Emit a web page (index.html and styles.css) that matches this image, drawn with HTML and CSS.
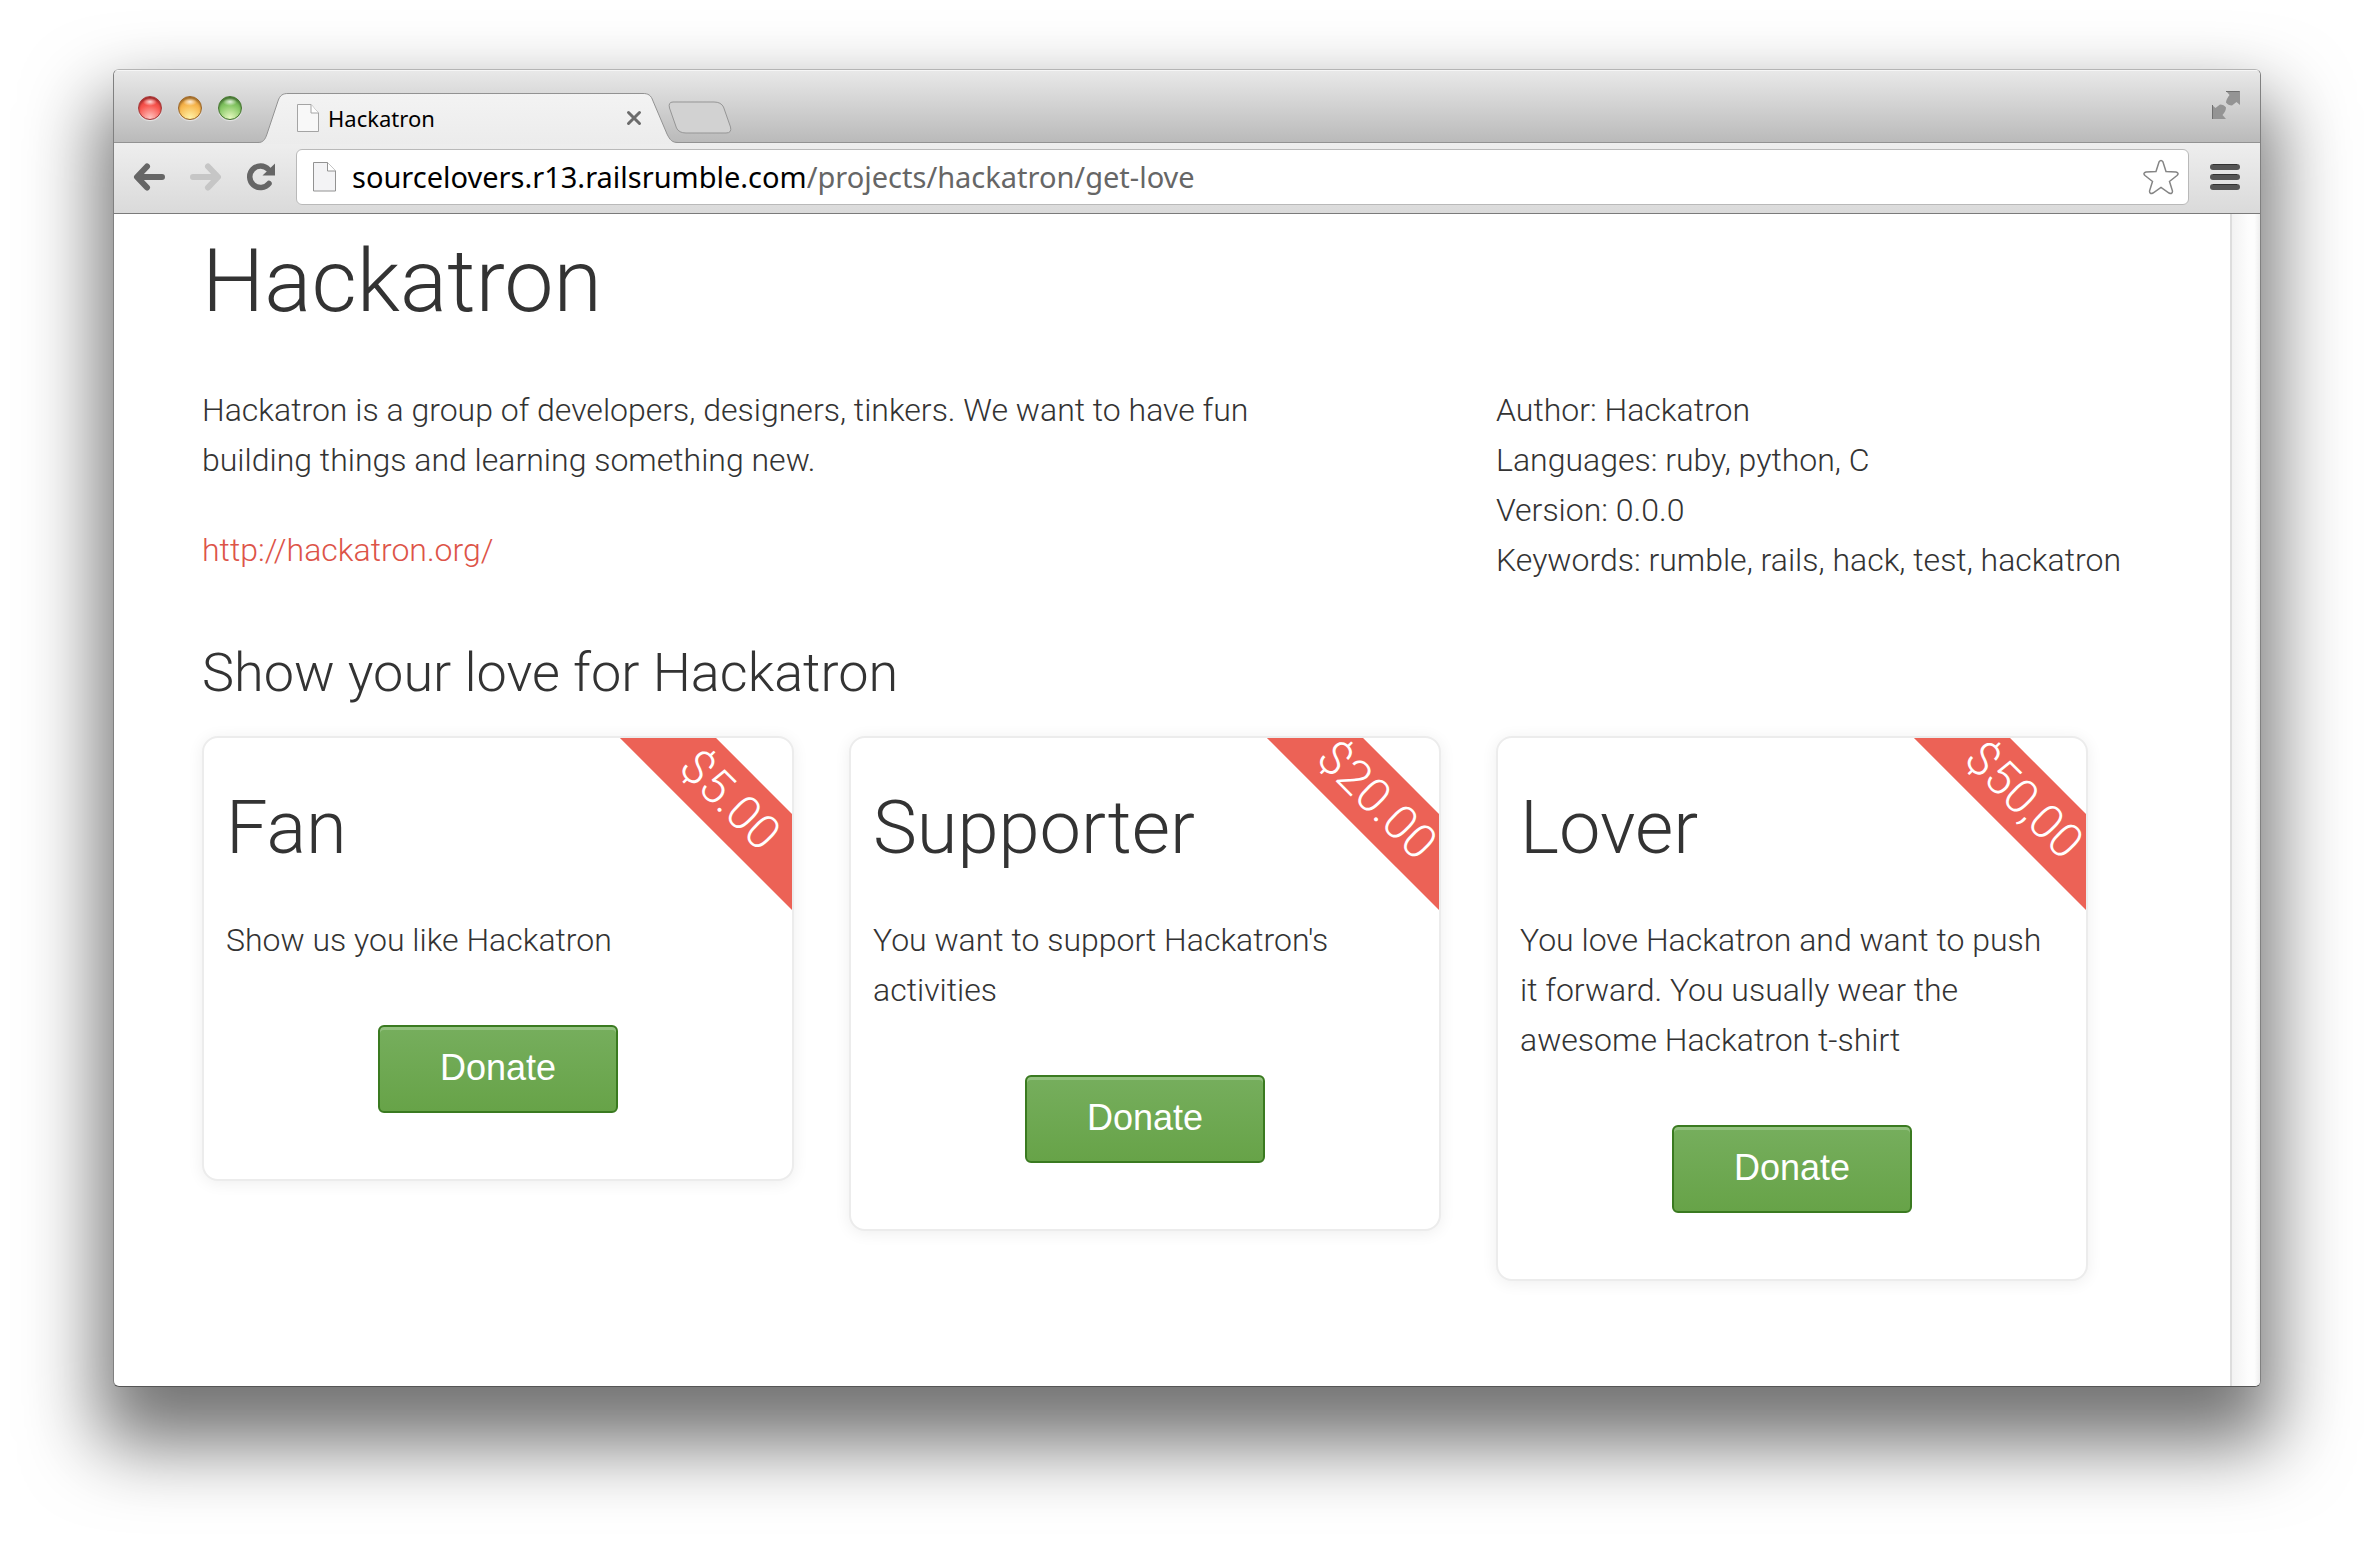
FILE: index.html
```html
<!DOCTYPE html>
<html lang="en">
<head>
<meta charset="utf-8">
<title>Hackatron</title>
<link rel="stylesheet" href="styles.css">
</head>
<body>
<div class="window">
  <header class="tabstrip">
    <div class="lights">
      <button class="light light-red" aria-label="Close window"></button>
      <button class="light light-amber" aria-label="Minimize window"></button>
      <button class="light light-green" aria-label="Zoom window"></button>
    </div>
    <div class="tab">
      <svg class="tab-shape" width="422" height="51" viewBox="0 0 422 51" aria-hidden="true">
        <defs>
          <linearGradient id="tabfill" x1="0" y1="0" x2="0" y2="1"><stop offset="0" stop-color="#f3f3f3"/><stop offset="1" stop-color="#ececec"/></linearGradient>
        </defs>
        <path d="M0 51V49.500C5 49.500 7 47 9 41L20 8C22 2 25 .5 30 .5H385C390 .5 393 2 395 8L409 41C412 47 414 49.500 420 49.500H422V51Z" fill="url(#tabfill)"/>
        <path d="M0 49.500C5 49.500 7 47 9 41L20 8C22 2 25 .5 30 .5H385C390 .5 393 2 395 8L409 41C412 47 414 49.500 420 49.500H422" fill="none" stroke="#929292"/>
      </svg>
      <svg class="icon" width="22" height="28" viewBox="0 0 22 28" aria-hidden="true">
        <path d="M.5.5H14L21.500 9V27.500H.5Z" fill="#f8f8f8" stroke="#a4a4a4"/><path d="M14 .5V9H21.500" fill="#fff" stroke="#a4a4a4"/>
      </svg>
      <span class="tab-title">Hackatron</span>
      <button class="plain" aria-label="Close tab">
        <svg width="16" height="16" viewBox="0 0 16 16"><path d="M2.500 2.500L13.500 13.500M13.500 2.500L2.500 13.500" stroke="#6b6b6b" stroke-width="3" stroke-linecap="round"/></svg>
      </button>
    </div>
    <button class="plain newtab" aria-label="New tab">
      <svg width="64" height="33" viewBox="0 0 64 33"><path d="M5 1H46Q53 1 55.500 6L62.500 26Q64 32 58 32H18Q11 32 8.500 27L1.500 7Q0 1 5 1Z" fill="#d2d2d2" stroke="#959595"/></svg>
    </button>
    <button class="plain fullscreen" aria-label="Enter full screen">
      <svg width="28" height="28" viewBox="0 0 28 28"><path d="M14 0H28V14L24.500 11L20 14.500Q16 14.500 14 11.500Q14 8.500 17.500 4Z" fill="#949494"/><path d="M14 .5H27.500" stroke="#707070"/><path d="M0 14L3.500 17L8 13.500Q12 13.500 14 16.500Q14 20 10.500 24L14 28H0Z" fill="#949494"/><path d="M.5 14V28" stroke="#707070"/></svg>
    </button>
  </header>
  <form class="toolbar">
    <div class="nav">
      <button type="button" class="plain" aria-label="Back">
        <svg width="32" height="28" viewBox="0 0 32 28"><path d="M14 3.500L4 14L14 24.500M5 14H29" fill="none" stroke="#666" stroke-width="6" stroke-linecap="round" stroke-linejoin="round"/></svg>
      </button>
      <button type="button" class="plain" aria-label="Forward">
        <svg width="32" height="28" viewBox="0 0 32 28"><path d="M18 3.500L28 14L18 24.500M27 14H3" fill="none" stroke="#c6c6c6" stroke-width="6" stroke-linecap="round" stroke-linejoin="round"/></svg>
      </button>
      <button type="button" class="plain" aria-label="Reload">
        <svg width="28" height="28" viewBox="0 0 28 28"><path d="M22 20.500A10.800 10.800 0 1 1 21.500 6.500" fill="none" stroke="#666" stroke-width="5.500" stroke-linecap="round"/><path d="M28 .5V12.500H15.500Z" fill="#666"/></svg>
      </button>
    </div>
    <div class="address">
      <svg class="icon" width="23" height="30" viewBox="0 0 23 30" aria-hidden="true">
        <path d="M.5.5H14.500L22.500 9V29H.5Z" fill="#f3f3f5" stroke="#929292"/><path d="M14.500 .5V9H22.500" fill="#fff" stroke="#929292"/>
      </svg>
      <label class="host" for="path">sourcelovers.r13.railsrumble.com</label>
      <input class="path" id="path" type="text" value="/projects/hackatron/get-love" spellcheck="false">
      <button type="button" class="plain" aria-label="Bookmark this page">
        <svg width="36" height="36" viewBox="0 0 36 36"><path d="M16 3Q18 0 20 3L23 12.500L33 13Q36.500 14 34 16.500L26.500 22.500L29.500 32Q29.500 35.500 26 34L18 28.500L10 34Q6.500 35.500 6.500 32L9.500 22.500L2 16.500Q-.5 14 3 13L13 12.500Z" fill="#fff" stroke="#858585" stroke-width="1.500"/></svg>
      </button>
    </div>
    <button type="button" class="plain" aria-label="Menu">
      <svg width="30" height="26" viewBox="0 0 30 26"><g fill="#555"><rect width="30" height="6" rx="3"/><rect y="10" width="30" height="6" rx="3"/><rect y="20" width="30" height="6" rx="3"/></g><path d="M3 .5H27M3 10.500H27M3 20.500H27" stroke="#333"/></svg>
    </button>
  </form>
  <div class="viewport">
    <main class="page">
      <h1>Hackatron</h1>
      <section class="grid intro">
        <div class="about">
          <p>Hackatron is a group of developers, designers, tinkers. We want to have fun building things and learning something new.</p>
          <p><a href="http://hackatron.org/">http://hackatron.org/</a></p>
        </div>
        <ul class="facts">
          <li>Author: Hackatron</li>
          <li>Languages: ruby, python, C</li>
          <li>Version: 0.0.0</li>
          <li>Keywords: rumble, rails, hack, test, hackatron</li>
        </ul>
      </section>
      <h2>Show your love for Hackatron</h2>
      <section class="grid">
        <article class="card">
          <span class="ribbon">$5.00</span>
          <h3>Fan</h3>
          <p>Show us you like Hackatron</p>
          <button class="donate">Donate</button>
        </article>
        <article class="card">
          <span class="ribbon">$20.00</span>
          <h3>Supporter</h3>
          <p>You want to support Hackatron's activities</p>
          <button class="donate">Donate</button>
        </article>
        <article class="card">
          <span class="ribbon">$50,00</span>
          <h3>Lover</h3>
          <p>You love Hackatron and want to push it forward. You usually wear the awesome Hackatron t-shirt</p>
          <button class="donate">Donate</button>
        </article>
      </section>
    </main>
    <div class="scrollbar"></div>
  </div>
</div>
</body>
</html>
```
FILE: styles.css
```css
* { box-sizing: border-box; }

body {
  margin: 0;
  min-height: 100vh;
  padding: 69px 113px 157px;
  display: flex;
  background: #fff;
  color: #333;
  font: 300 32px/50px Roboto, "Liberation Sans", sans-serif;
}

h1, h2, h3, p, ul { margin: 0; padding: 0; font-weight: 300; }

.window {
  flex: 1;
  min-width: 0;
  display: flex;
  flex-direction: column;
  border: 1px solid #808080;
  border-top-color: #b4b4b4;
  border-bottom-color: #555;
  border-radius: 6px;
  background: #fff;
  overflow: hidden;
  box-shadow: 0 44px 74px 14px rgba(0, 0, 0, .55);
}

.plain {
  display: flex;
  padding: 0;
  border: 0;
  background: none;
}

.icon { flex: none; }

/* Tab strip */
.tabstrip {
  display: flex;
  align-items: flex-end;
  height: 73px;
  padding: 0 20px 0 24px;
  background: linear-gradient(#e9e9e9, #bababa);
  border-bottom: 1px solid #929292;
  box-shadow: inset 0 1px #f6f6f6;
}

.lights {
  display: flex;
  gap: 16px;
  margin-right: 16px;
  padding-bottom: 22px;
}

.light {
  width: 24px;
  height: 24px;
  padding: 0;
  border: 1px solid;
  border-radius: 50%;
  box-shadow: 0 1px 1px rgba(255, 255, 255, .6), inset 0 2px 2px rgba(0, 0, 0, .3);
}

.light-red {
  border-color: #a3383a;
  background: radial-gradient(ellipse 7px 4px at 50% 22%, rgba(255, 255, 255, .8), transparent), radial-gradient(circle at 50% 95%, #ffc4c0, #f8564f 55%, #d8302f);
}

.light-amber {
  border-color: #9a6427;
  background: radial-gradient(ellipse 7px 4px at 50% 22%, rgba(255, 255, 255, .8), transparent), radial-gradient(circle at 50% 95%, #fff3a8, #f8b850 55%, #d98a2b);
}

.light-green {
  border-color: #44752f;
  background: radial-gradient(ellipse 7px 4px at 50% 22%, rgba(255, 255, 255, .8), transparent), radial-gradient(circle at 50% 95%, #e6f9c0, #86c765 55%, #54963c);
}

.tab {
  position: relative;
  display: flex;
  align-items: center;
  width: 422px;
  height: 51px;
  margin-bottom: -2px;
  padding: 0 38px 2px 39px;
}

.tab-shape {
  position: absolute;
  inset: 0;
}

.tab > :not(.tab-shape) { position: relative; }

.tab-title {
  flex: 1;
  padding-left: 9px;
  color: #000;
  font: 400 22px/28px "Noto Sans", "Open Sans", sans-serif;
}

.newtab {
  margin-left: -12px;
  padding-bottom: 8px;
}

.fullscreen {
  margin-left: auto;
  padding-bottom: 23px;
}

/* Toolbar */
.toolbar {
  display: flex;
  align-items: center;
  gap: 21px;
  height: 71px;
  padding: 0 20px 2px 19px;
  background: linear-gradient(#eee, #dadada);
  border-bottom: 1px solid #7a7a7a;
}

.nav {
  display: flex;
  gap: 25px;
}

.address {
  flex: 1;
  display: flex;
  align-items: center;
  height: 56px;
  padding: 0 9px 0 16px;
  border: 1px solid #b9b9b9;
  border-radius: 6px;
  background: #fff;
  font: 400 29px/40px "Noto Sans", "Open Sans", sans-serif;
}

.host {
  padding-left: 16px;
  color: #000;
}

.path {
  flex: 1;
  min-width: 0;
  padding: 0;
  border: 0;
  outline: 0;
  background: none;
  color: #666;
  font: inherit;
}

/* Page */
.viewport {
  flex: 1;
  display: flex;
}

.page {
  flex: 1;
  min-width: 0;
  padding: 17px 142px 100px 88px;
}

.scrollbar {
  width: 30px;
  border-left: 2px solid #ddd;
  background: linear-gradient(90deg, #f2f2f2, #fdfdfd 60%, #fdfdfd 80%, #eee);
}

h1 {
  margin-bottom: 54px;
  font-size: 88px;
  line-height: 100px;
}

h2 {
  margin: 22px 0 27px;
  font-size: 54px;
  line-height: 72px;
}

.grid {
  display: grid;
  grid-template-columns: repeat(3, minmax(0, 1fr));
  align-items: start;
  gap: 55px;
}

.about {
  grid-column: span 2;
  padding-right: 128px;
}

.about p { margin-bottom: 40px; }

.about a {
  color: #dd5448;
  text-decoration: none;
}

.facts {
  list-style: none;
  white-space: nowrap;
}

.card {
  position: relative;
  overflow: hidden;
  padding: 48px 22px 66px;
  border: 2px solid #ececec;
  border-radius: 16px;
  background: #fff;
  box-shadow: 0 2px 16px rgba(0, 0, 0, .07);
}

h3 {
  margin-bottom: 45px;
  font-size: 74px;
  line-height: 84px;
}

.ribbon {
  position: absolute;
  top: 28px;
  right: -68px;
  width: 260px;
  background: #ec6256;
  color: #fff;
  font-size: 48px;
  line-height: 68px;
  text-align: center;
  transform: rotate(45deg);
}

.donate {
  display: block;
  width: 240px;
  height: 88px;
  margin: 60px auto 0;
  padding: 0 0 2px;
  border: 2px solid #3a7a20;
  border-radius: 6px;
  background: linear-gradient(#76ae5d, #67a348);
  box-shadow: inset 0 3px #93c17f;
  color: #fff;
  font: 400 36px/40px "Liberation Sans", Arial, sans-serif;
}
```
